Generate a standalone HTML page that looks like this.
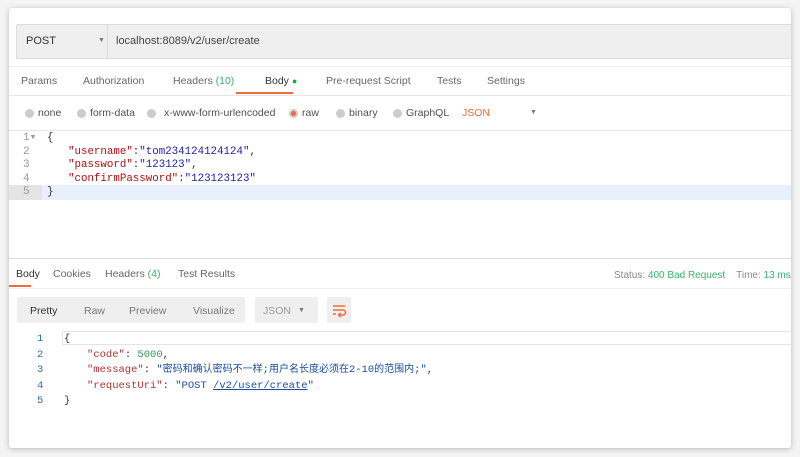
<!DOCTYPE html>
<html><head><meta charset="utf-8"><style>
*{margin:0;padding:0;box-sizing:border-box}
body{width:800px;height:457px;background:#f4f4f4;font-family:"Liberation Sans","Noto Sans CJK SC",sans-serif;position:relative;overflow:hidden;font-size:11px;color:#505050}
.win{position:absolute;left:9px;top:8px;width:782px;height:440px;background:#fff;box-shadow:0 1px 6px rgba(0,0,0,.25);border-radius:3px;overflow:hidden}
.a{position:absolute;white-space:nowrap}
.mono{font-family:"Liberation Mono","Noto Sans CJK SC",monospace}
.rd{position:absolute;width:9px;height:9px;border-radius:50%;background:#ccc}
.t{font-size:10.5px}
</style></head><body>
<div class="win">
 <div class="a" style="left:7px;top:16px;width:790px;height:35px;background:#efefef;border:1px solid #dcdcdc;border-radius:2px"></div>
 <div class="a" style="left:98px;top:17px;width:1px;height:33px;background:#dcdcdc"></div>
 <div class="a" style="left:17px;top:27px;font-size:11px;color:#333">POST</div>
 <div class="a" style="left:89px;top:29px;font-size:7px;color:#777">▼</div>
 <div class="a" style="left:107px;top:27px;font-size:11px;color:#444">localhost:8089/v2/user/create</div>
 <div class="a" style="left:0;top:58px;width:782px;height:1px;background:#eee"></div>
 <div class="a t" style="left:12px;top:67px;color:#666">Params</div>
 <div class="a t" style="left:74px;top:67px;color:#666">Authorization</div>
 <div class="a t" style="left:164px;top:67px;color:#666">Headers <span style="color:#3bb26e">(10)</span></div>
 <div class="a t" style="left:256px;top:67px;color:#333">Body <span style="color:#1ba35a;font-size:9px">●</span></div>
 <div class="a" style="left:227px;top:84px;width:57px;height:2px;background:#f26b3a"></div>
 <div class="a t" style="left:317px;top:67px;color:#666">Pre-request Script</div>
 <div class="a t" style="left:428px;top:67px;color:#666">Tests</div>
 <div class="a t" style="left:478px;top:67px;color:#666">Settings</div>
 <div class="a" style="left:0;top:87px;width:782px;height:1px;background:#e6e6e6"></div>
 <div class="rd" style="left:16px;top:101px"></div><div class="a t" style="left:29px;top:99px">none</div>
 <div class="rd" style="left:68px;top:101px"></div><div class="a t" style="left:81px;top:99px">form-data</div>
 <div class="rd" style="left:138px;top:101px"></div><div class="a t" style="left:155px;top:99px">x-www-form-urlencoded</div>
 <div class="rd" style="left:280px;top:101px;background:radial-gradient(circle,#f26b3a 35%,#ccc 45%)"></div><div class="a t" style="left:293px;top:99px">raw</div>
 <div class="rd" style="left:327px;top:101px"></div><div class="a t" style="left:340px;top:99px">binary</div>
 <div class="rd" style="left:384px;top:101px"></div><div class="a t" style="left:397px;top:99px">GraphQL</div>
 <div class="a t" style="left:453px;top:99px;color:#f26b3a">JSON</div>
 <div class="a" style="left:521px;top:101px;font-size:7px;color:#777">▼</div>
 <div class="a" style="left:0;top:122px;width:782px;height:1px;background:#e6e6e6"></div>
 <div class="a" style="left:33px;top:177px;width:749px;height:15px;background:#e8f0fc"></div>
 <div class="a" style="left:0;top:177px;width:33px;height:15px;background:#e4e4e4"></div>
 <div class="a mono" style="left:14px;top:124px;font-size:11px;line-height:13.5px;color:#999">1▾<br>2<br>3<br>4<br>5</div>
 <div class="a mono" style="left:38px;top:124px;font-size:10.8px;line-height:13.5px;color:#333">{<br><span style="padding-left:21px;color:#a11">"username"</span>:<span style="color:#22a">"tom234124124124"</span>,<br><span style="padding-left:21px;color:#a11">"password"</span>:<span style="color:#22a">"123123"</span>,<br><span style="padding-left:21px;color:#a11">"confirmPassword"</span>:<span style="color:#22a">"123123123"</span><br>}</div>
 <div class="a" style="left:0;top:250px;width:782px;height:1px;background:#ddd"></div>
 <div class="a t" style="left:7px;top:260px;color:#333">Body</div>
 <div class="a t" style="left:44px;top:260px;color:#666">Cookies</div>
 <div class="a t" style="left:96px;top:260px;color:#666">Headers <span style="color:#3bb26e">(4)</span></div>
 <div class="a t" style="left:169px;top:260px;color:#666">Test Results</div>
 <div class="a" style="left:0;top:277px;width:22px;height:2px;background:#f26b3a"></div>
 <div class="a" style="left:0;top:280px;width:782px;height:1px;background:#eee"></div>
 <div class="a" style="left:605px;top:262px;font-size:10px;color:#888">Status: <span style="color:#3bb26e">400 Bad Request</span>&nbsp;&nbsp;&nbsp; Time: <span style="color:#3bb26e">13 ms</span></div>
 <div class="a" style="left:8px;top:289px;width:228px;height:26px;background:#efefef;border-radius:2px"></div>
 <div class="a t" style="left:21px;top:297px;color:#333">Pretty</div>
 <div class="a t" style="left:75px;top:297px;color:#777">Raw</div>
 <div class="a t" style="left:120px;top:297px;color:#777">Preview</div>
 <div class="a t" style="left:184px;top:297px;color:#777">Visualize</div>
 <div class="a" style="left:246px;top:289px;width:63px;height:26px;background:#efefef;border-radius:2px"></div>
 <div class="a t" style="left:254px;top:297px;color:#999">JSON</div>
 <div class="a" style="left:289px;top:299px;font-size:7px;color:#777">▼</div>
 <div class="a" style="left:318px;top:289px;width:24px;height:26px;background:#efefef;border-radius:2px"></div>
 <svg class="a" style="left:322px;top:294px" width="16" height="16" viewBox="0 0 16 16" fill="none" stroke="#f26b3a" stroke-width="1.5"><path d="M2 4h12M2 8h10a2.5 2.5 0 0 1 0 5H8M9.5 11l-2 2 2 2M2 12h3"/></svg>
 <div class="a" style="left:53px;top:323px;width:730px;height:14px;border:1px solid #e4e4e4;border-right:none"></div>
 <div class="a mono" style="left:28px;top:324px;font-size:10.5px;line-height:15.5px;color:#2a6fb0">1<br>2<br>3<br>4<br>5</div>
 <div class="a mono" style="left:55px;top:324px;font-size:10.5px;line-height:15.5px;color:#333">{<br><span style="padding-left:23px;color:#a33">"code"</span>: <span style="color:#2a9a5a">5000</span>,<br><span style="padding-left:23px;color:#a33">"message"</span>: <span style="color:#1a4ea0">"<span style="font-size:10px">密码和确认密码不一样</span>;<span style="font-size:10px">用户名长度必须在</span>2-10<span style="font-size:10px">的范围内</span>;"</span>,<br><span style="padding-left:23px;color:#a33">"requestUri"</span>: <span style="color:#1a4ea0">"POST <u>/v2/user/create</u>"</span><br>}</div>
</div>
</body></html>
